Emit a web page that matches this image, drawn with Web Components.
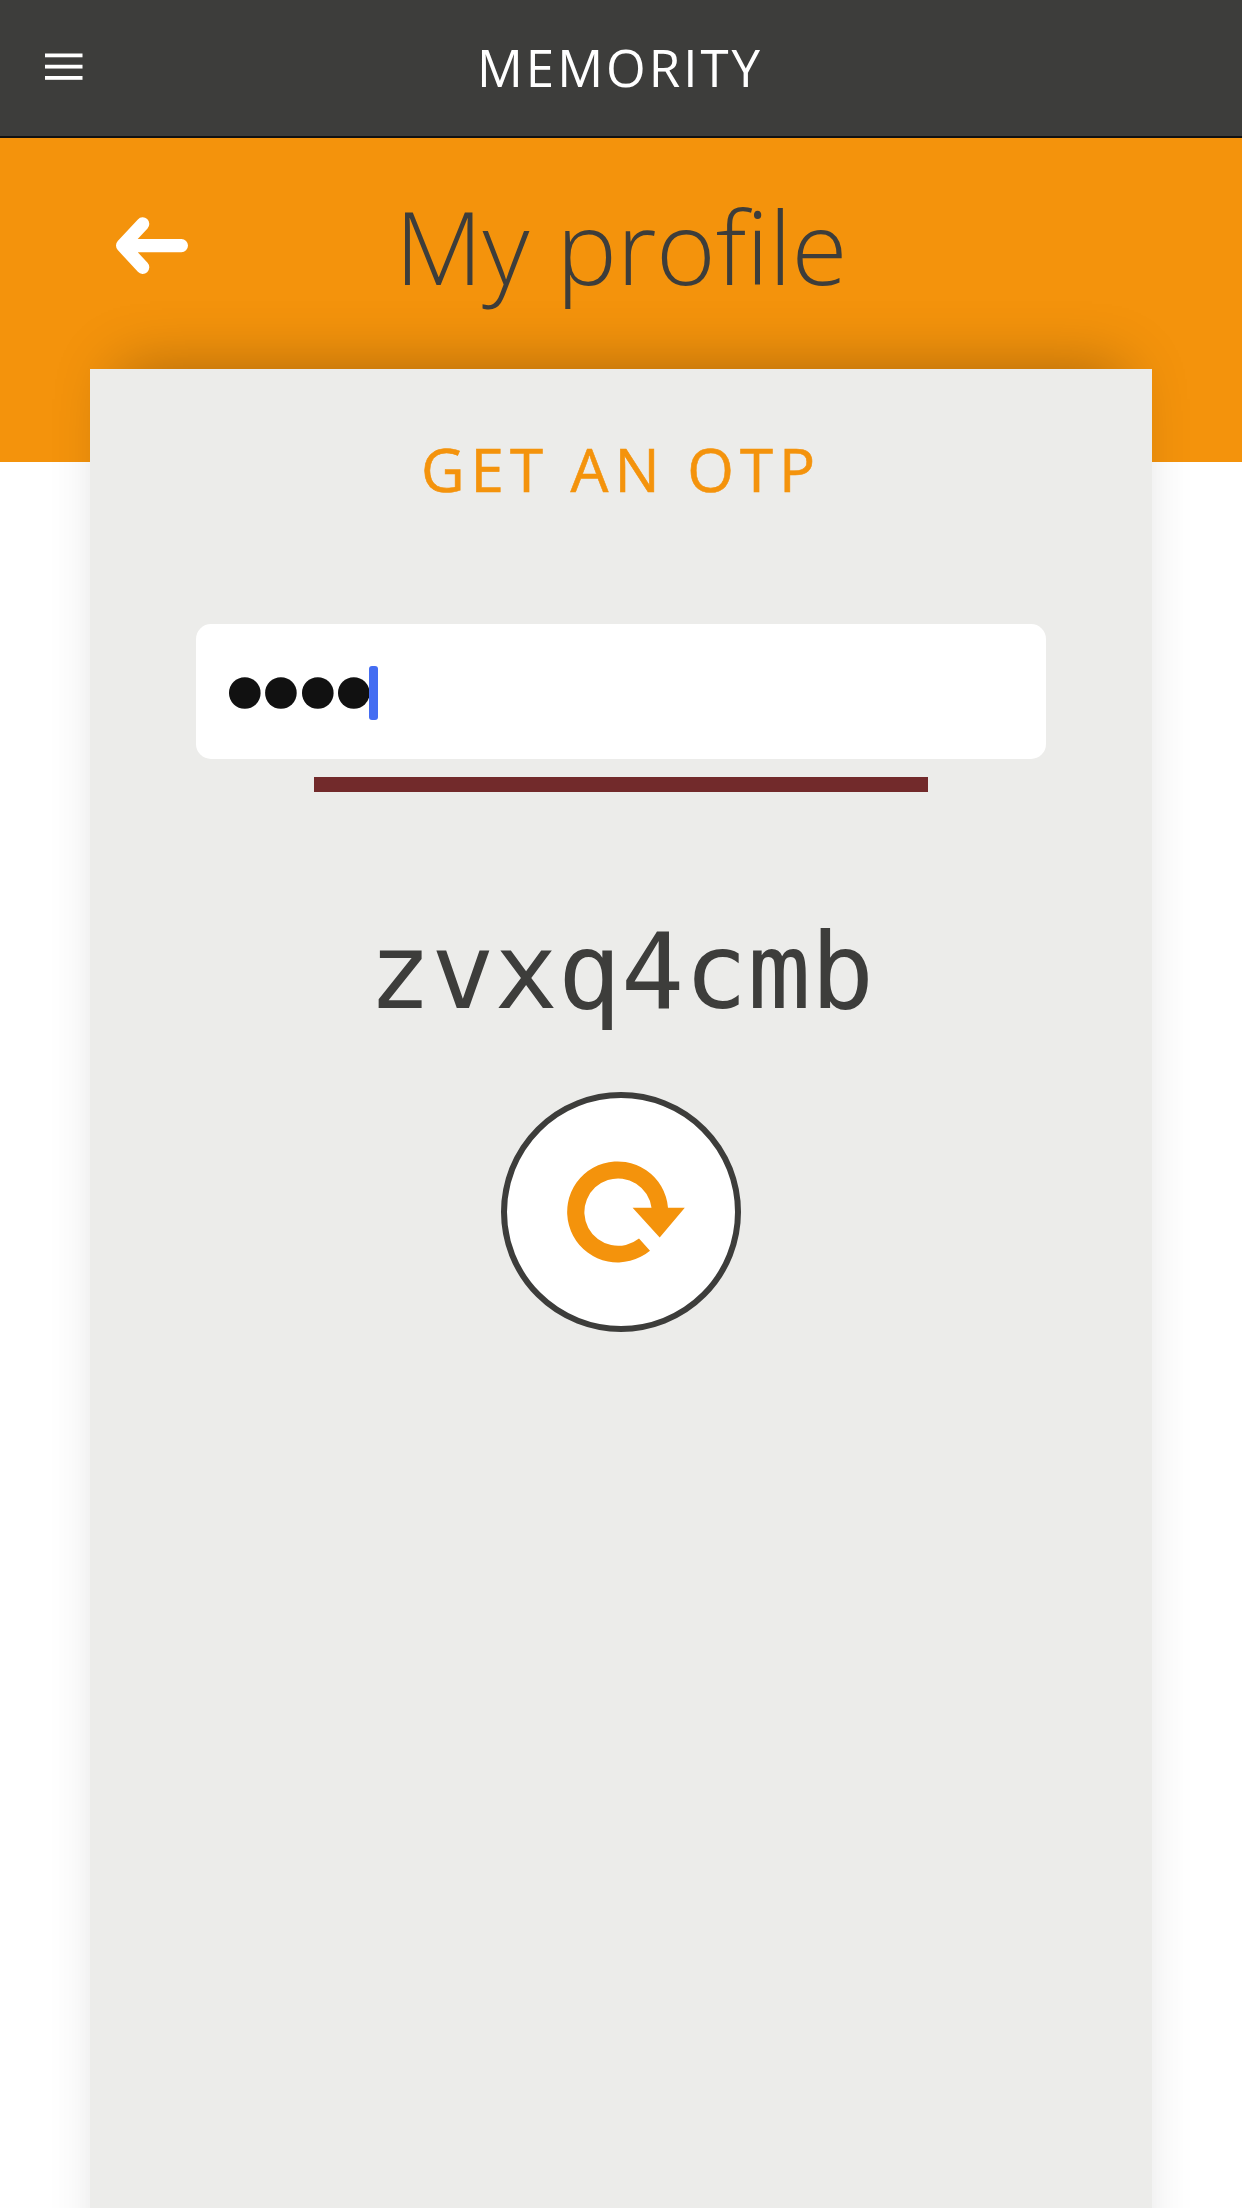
<!DOCTYPE html>
<html lang="en">
<head>
<meta charset="utf-8">
<title>Memority</title>
<style>
html, body { margin: 0; height: 100%; background: #fff; overflow: hidden; }
body { font-family: "Open Sans", sans-serif; color: #3d3d3b; }
</style>
</head>
<body>
<otp-app></otp-app>
<script>
const define = (name, html) => {
  const tpl = document.createElement('template');
  tpl.innerHTML = html;
  customElements.define(name, class extends HTMLElement {
    constructor() {
      super();
      this.attachShadow({ mode: 'open' }).append(tpl.content.cloneNode(true));
    }
  });
};

define('app-bar', `
<style>
:host { display: grid; grid-template-columns: 150px 1fr 152px; box-sizing: border-box; height: 138px; background: #3d3d3b; border-bottom: 2px solid #111; color: #fff; }
svg { display: block; }
h1 { margin: 0; font-size: 51px; font-weight: 400; letter-spacing: 3px; line-height: 70px; padding-top: 32px; text-align: center; }
</style>
<svg width="150" height="136" viewBox="0 0 150 136" fill="#fff">
<rect x="45" y="53.5" width="37.5" height="3.8"/><rect x="45" y="64.75" width="37.5" height="3.8"/><rect x="45" y="76" width="37.5" height="3.8"/>
</svg>
<h1><slot></slot></h1>`);

define('page-banner', `
<style>
:host { display: grid; grid-template-columns: 200px 1fr 200px; height: 324px; background: #f4930c; }
svg { display: block; }
h2 { margin: 0; font-size: 102px; font-weight: 300; letter-spacing: -.27px; word-spacing: 1px; line-height: 140px; padding-top: 38px; text-align: center; white-space: nowrap; }
</style>
<svg width="200" height="200" viewBox="0 138 200 200" fill="none" stroke="#fff" stroke-width="13.2" stroke-linecap="round" stroke-linejoin="round">
<path d="M142.7 223.9L122.6 245.6L142.7 267.3M122.6 245.6H181.4"/>
</svg>
<h2><slot></slot></h2>`);

define('otp-card', `
<style>
:host { display: flex; flex-direction: column; align-items: center; box-sizing: border-box; margin: -93px 90px -180px; flex: 1; padding-top: 59px; background: #ececea; box-shadow: 0 -30px 60px -30px rgba(0,0,0,.3); }
h3 { margin: 0 0 113px; font-size: 60px; font-weight: 400; -webkit-text-stroke: .6px #f4930c; letter-spacing: 6px; line-height: 83px; color: #f4930c; }
</style>
<h3>GET AN OTP</h3>
<slot></slot>`);

define('pin-field', `
<style>
:host { display: flex; align-items: center; box-sizing: border-box; width: 850px; height: 135px; padding: 3px 0 0 32.5px; border-radius: 15px; background: #fff; }
svg { display: block; }
.caret { width: 9px; height: 54px; border-radius: 3px; background: #446df2; }
</style>
<svg width="140.5" height="32" viewBox="228.5 677 140.5 32" fill="#111"><circle cx="244.3" cy="693" r="15.8"/><circle cx="280.4" cy="693" r="15.8"/><circle cx="317.3" cy="693" r="15.8"/><circle cx="353.3" cy="693" r="15.8"/></svg>
<div class="caret"></div>`);

define('time-bar', `
<style>:host { display: block; width: 614px; height: 15px; margin: 18px 0 0; background: #722a2b; }</style>`);

define('otp-code', `
<style>
:host { display: block; margin-top: 119px; font: 105px/122px "DejaVu Sans Mono", monospace; color: #3d3d3b; }
</style><slot></slot>`);

define('refresh-button', `
<style>
:host { display: block; box-sizing: border-box; width: 240px; height: 240px; margin-top: 59px; border: 6px solid #3d3d3b; border-radius: 50%; background: #fff; }
svg { display: block; }
</style>
<svg width="228" height="228" viewBox="6 6 228 228" fill="#f4930c">
<path d="M167 115.8A50.5 50.5 0 1 0 149 158.7L138 146.5A33.7 33.7 0 1 1 150.5 115.8H131.6L158.7 145.4L183.8 115.8Z"/>
</svg>`);

define('otp-app', `
<style>:host { display: flex; flex-direction: column; height: 2208px; overflow: hidden; }</style>
<app-bar>MEMORITY</app-bar>
<page-banner>My profile</page-banner>
<otp-card>
<pin-field></pin-field>
<time-bar></time-bar>
<otp-code>zvxq4cmb</otp-code>
<refresh-button></refresh-button>
</otp-card>`);
</script>
</body>
</html>
